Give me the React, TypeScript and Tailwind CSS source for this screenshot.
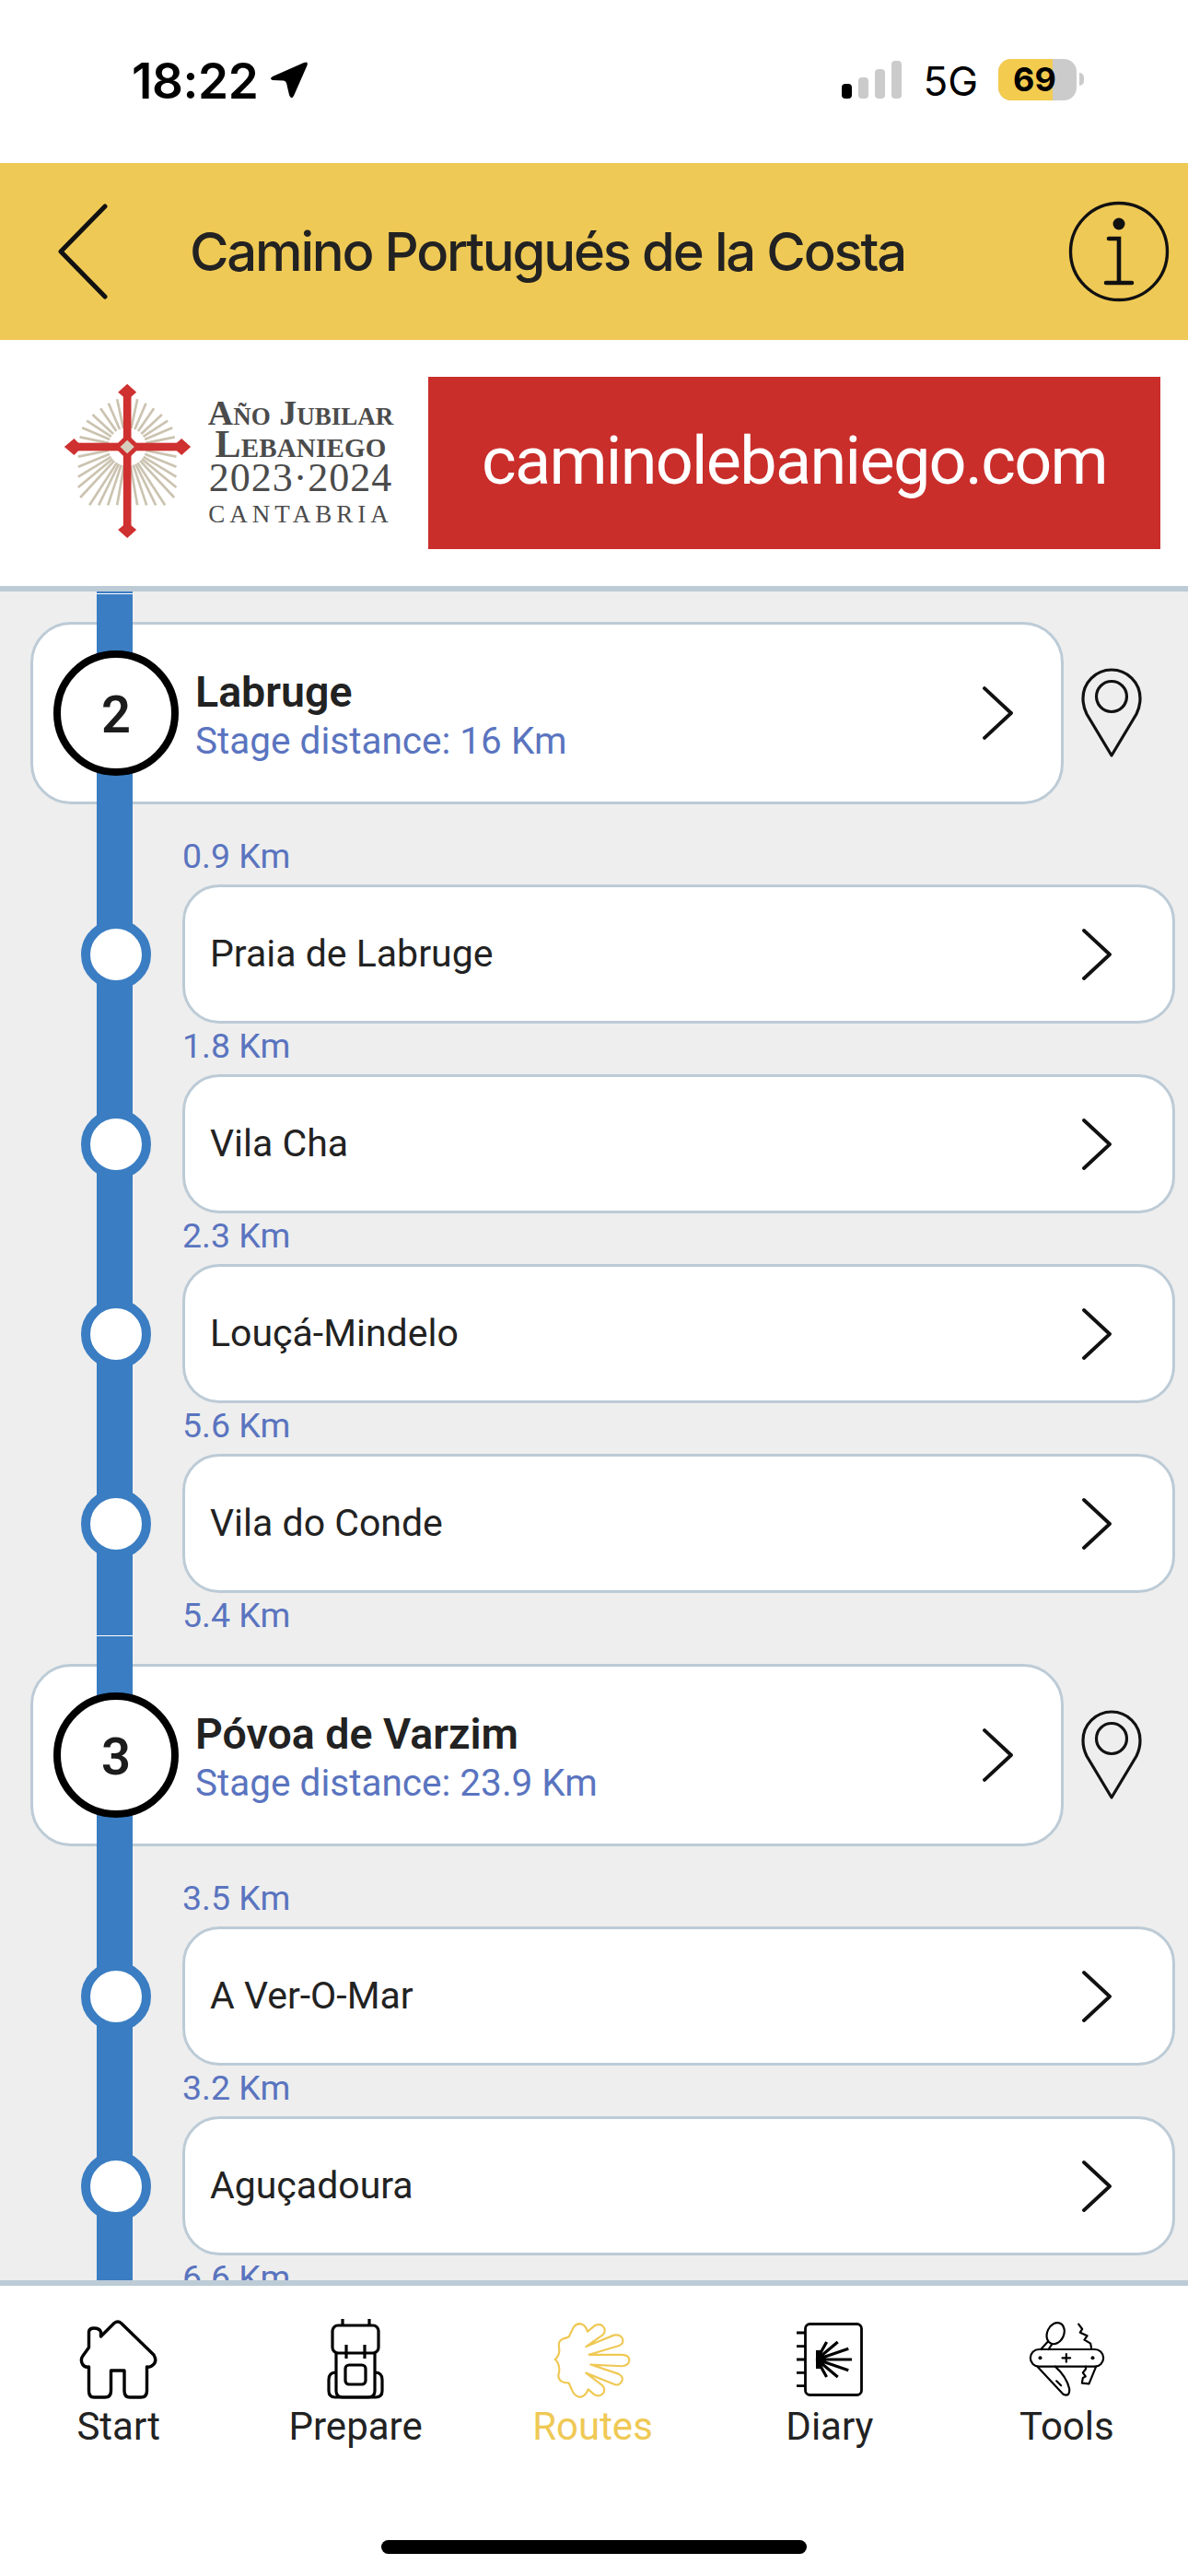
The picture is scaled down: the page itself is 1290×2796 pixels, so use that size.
import React from "react";

const FONT = "font-['Roboto',sans-serif]";

function Chevron({ className }: { className: string }) {
  return (
    <svg viewBox="0 0 32 56" className={className} fill="none" stroke="#111" strokeWidth="3.8" strokeLinecap="round" strokeLinejoin="round">
      <path d="M2 2 L30 28 L2 54" />
    </svg>
  );
}

function Pin() {
  return (
    <svg viewBox="0 0 66 98" className="w-[66px] h-[98px] shrink-0" fill="none" stroke="#111" strokeWidth="3.2">
      <path d="M33 95 L6 50 Q2 42 2 33 A31 31 0 0 1 64 33 Q64 42 60 50 Z" strokeLinejoin="round" />
      <circle cx="33" cy="31" r="16.5" />
    </svg>
  );
}

function Stage({ n, name, dist }: { n: string; name: string; dist: string }) {
  return (
    <div className="flex items-center ml-[33px]">
      <div className="w-[1122px] h-[198px] shrink-0 bg-white border-[3px] border-[#bccbd6] rounded-[44px] flex items-center">
        <div className="relative z-10 ml-[22px] w-[136px] h-[136px] rounded-full bg-white border-[8px] border-black flex items-center justify-center shrink-0">
          <span className="text-[56px] leading-none font-semibold text-[#1c1c1c] pt-[4px]">{n}</span>
        </div>
        <div className="ml-[18px] flex-1 flex flex-col pt-[4px]">
          <span className="text-[46.5px] leading-[55px] font-semibold text-[#222]">{name}</span>
          <span className="text-[40.5px] leading-[50px] text-[#5a74bf]">{dist}</span>
        </div>
        <Chevron className="w-[33px] h-[58px] mr-[52px] shrink-0" />
      </div>
      <div className="ml-[19px]">
        <Pin />
      </div>
    </div>
  );
}

function Km({ v }: { v: string }) {
  return (
    <div className="h-[55px] ml-[198px] flex items-center text-[37.5px] leading-none text-[#5a74bf] pb-[5px]">{v}</div>
  );
}

function Row({ km, name }: { km: string; name: string }) {
  return (
    <div>
      <Km v={km} />
      <div className="flex items-center h-[151px]">
        <div className="w-[198px] pl-[88px] shrink-0">
          <div className="relative z-10 w-[76px] h-[76px] rounded-full bg-white border-[10px] border-[#3a7dc2]" />
        </div>
        <div className="w-[1078px] h-[151px] bg-white border-[3px] border-[#bccbd6] rounded-[40px] flex items-center justify-between pl-[27px] pr-[66px]">
          <span className="text-[41px] text-[#222]">{name}</span>
          <Chevron className="w-[32px] h-[58px] shrink-0" />
        </div>
      </div>
    </div>
  );
}

function NavItem({ label, active, children }: { label: string; active?: boolean; children: React.ReactNode }) {
  return (
    <div className="flex flex-col items-center">
      <div className="h-[88px] flex items-center justify-center">{children}</div>
      <span className={`mt-[6px] text-[42px] leading-[46px] ${active ? "text-[#efc955]" : "text-[#222]"}`}>{label}</span>
    </div>
  );
}

const upperRays: [number, number][] = [
  [298, 105], [326, 118], [352, 135], [378, 155], [397, 175], [412, 198], [420, 228],
];
const lowerRays: [number, number][] = [
  [425, 292], [425, 325], [425, 358], [425, 392], [418, 425], [388, 450], [358, 450], [328, 450], [298, 450],
];

function Cross() {
  const cx = 265;
  const cy = 260;
  const ray = (x: number, y: number, key: string, start: number) => {
    const dx = x - cx;
    const dy = y - cy;
    const d = Math.hypot(dx, dy);
    const k = Math.min(start / d, 0.75);
    return <line key={key} x1={cx + dx * k} y1={cy + dy * k} x2={x} y2={y} />;
  };
  const mirror = (x: number) => 2 * cx - x;
  return (
    <svg viewBox="55 50 425 510" className="w-[142px] h-[170px] shrink-0 mb-[5px]">
      <g stroke="#cbc3b0" strokeWidth="8" fill="none">
        {upperRays.map(([x, y], i) => ray(x, y, `ur${i}`, 62))}
        {upperRays.map(([x, y], i) => ray(mirror(x), y, `ul${i}`, 62))}
        {lowerRays.map(([x, y], i) => ray(x, y, `lr${i}`, 62))}
        {lowerRays.map(([x, y], i) => ray(mirror(x), y, `ll${i}`, 62))}
      </g>
      <g fill="#cf3030">
        <rect x="252" y="75" width="26" height="460" />
        <rect x="80" y="247" width="370" height="26" />
        <path d="M265 55 L295 82 L265 108 L235 82 Z" />
        <path d="M265 505 L295 530 L265 557 L235 530 Z" />
        <path d="M60 260 L92 233 L118 260 L92 287 Z" />
        <path d="M472 260 L442 233 L412 260 L442 287 Z" />
        <path d="M265 218 L308 260 L265 302 L222 260 Z" />
      </g>
      <path d="M265 238 L288 260 L265 282 L242 260 Z" fill="#d6cfbd" />
    </svg>
  );
}

export default function App() {
  return (
    <div className={`w-[1290px] h-[2796px] flex flex-col bg-white overflow-hidden ${FONT}`}>
      {/* status bar */}
      <div className="h-[177px] shrink-0 flex items-start justify-between pl-[143px] pr-[113px] pt-[59px] font-['Inter',sans-serif] text-black">
        <div className="flex items-center h-[58px]">
          <span className="text-[53px] leading-none font-semibold tracking-[-0.4px]">18:22</span>
          <svg viewBox="0 0 42 42" className="w-[42px] h-[42px] ml-[13px] mb-[2px]" fill="#000">
            <path d="M3 17 L37 2 Q42 0 40.5 5 L26 38 Q23 43 21 37 L18 24 Q17.5 22 15 21.5 L3 21 Q-1 19.5 3 17 Z" />
          </svg>
        </div>
        <div className="flex items-center h-[58px] -mt-[2px]">
          <div className="flex items-end gap-[7px] h-[41px] mt-[1px]">
            <div className="w-[11px] h-[16px] rounded-[4px] bg-black" />
            <div className="w-[11px] h-[23px] rounded-[4px] bg-[#cbcbcb]" />
            <div className="w-[11px] h-[32px] rounded-[4px] bg-[#cbcbcb]" />
            <div className="w-[11px] h-[41px] rounded-[4px] bg-[#cbcbcb]" />
          </div>
          <span className="ml-[23px] text-[44px] leading-none mt-[4px]">5G</span>
          <div className="ml-[22px] w-[85px] h-[45px] rounded-[14px] bg-[#cbcbcb] overflow-hidden relative flex">
            <div className="w-[59px] h-full bg-[#f3cb4f]" />
            <span className="absolute inset-0 pl-[16px] flex items-center text-[36px] font-bold leading-none">69</span>
          </div>
          <div className="ml-[3px] w-[5px] h-[14px] rounded-r-full bg-[#cbcbcb]" />
        </div>
      </div>

      {/* header */}
      <div className="h-[192px] shrink-0 bg-[#efc955] flex items-center pl-[63px] pr-[20px]">
        <svg viewBox="0 0 54 104" className="w-[54px] h-[104px] shrink-0" fill="none" stroke="#111" strokeWidth="5" strokeLinecap="round" strokeLinejoin="round">
          <path d="M51 3 L3 52 L51 101" />
        </svg>
        <span className="ml-[89px] flex-1 text-[58px] leading-none text-[#222] font-['Inter',sans-serif] font-medium tracking-[-2.2px]">Camino Portugués de la Costa</span>
        <svg viewBox="0 0 110 110" className="w-[110px] h-[110px] shrink-0" fill="none" stroke="#111" strokeLinecap="round">
          <circle cx="55" cy="55" r="52.5" strokeWidth="3.4" />
          <circle cx="55" cy="25" r="6.5" fill="#111" stroke="none" />
          <path d="M44 41 L55 41 L55 89 M41 89 L69 89" strokeWidth="4.6" />
        </svg>
      </div>

      {/* banner */}
      <div className="h-[267px] shrink-0 bg-white flex items-center pl-[68px]">
        <Cross />
        <div className="ml-[14px] w-[205px] flex flex-col items-center font-['Liberation_Serif',serif] text-[#4b4b4b] font-bold">
          <span className="text-[38px] leading-[33px] [font-variant:small-caps] whitespace-nowrap">Año Jubilar</span>
          <span className="text-[42px] leading-[34px] [font-variant:small-caps] tracking-[0.2px] whitespace-nowrap">Lebaniego</span>
          <span className="text-[44px] leading-[40px] font-normal tracking-[1px] whitespace-nowrap">2023·2024</span>
          <span className="mt-[4px] text-[27px] leading-[30px] font-normal tracking-[5px] whitespace-nowrap">CANTABRIA</span>
        </div>
        <div className="ml-[36px] w-[795px] h-[187px] bg-[#c92e2b] flex items-center justify-center pb-[4px]">
          <span className="text-[72px] leading-none text-white font-['Roboto',sans-serif] tracking-[-1.7px]">caminolebaniego.com</span>
        </div>
      </div>

      {/* list */}
      <div className="flex-1 min-h-0 border-t-[6px] border-b-[6px] border-[#bccbd6] bg-[#eeeeee] overflow-hidden relative pt-[33px]">
        <div className="absolute left-[105px] top-0 bottom-0 w-[39px] flex flex-col">
          <div className="h-[2px] bg-[#3a7dc2]" />
          <div className="h-px bg-white" />
          <div className="h-[1130px] bg-[#3a7dc2]" />
          <div className="h-px bg-white" />
          <div className="flex-1 bg-[#3a7dc2]" />
        </div>
        <Stage n="2" name="Labruge" dist="Stage distance: 16 Km" />
        <div className="mt-[32px]">
          <Row km="0.9 Km" name="Praia de Labruge" />
          <Row km="1.8 Km" name="Vila Cha" />
          <Row km="2.3 Km" name="Louçá-Mindelo" />
          <Row km="5.6 Km" name="Vila do Conde" />
          <Km v="5.4 Km" />
        </div>
        <div className="mt-[22px]">
          <Stage n="3" name="Póvoa de Varzim" dist="Stage distance: 23.9 Km" />
        </div>
        <div className="mt-[32px]">
          <Row km="3.5 Km" name="A Ver-O-Mar" />
          <Row km="3.2 Km" name="Aguçadoura" />
          <Km v="6.6 Km" />
        </div>
      </div>

      {/* nav */}
      <div className="h-[315px] shrink-0 bg-white flex flex-col">
        <div className="grid grid-cols-5 pt-[36px] h-[276px] pr-[3px]">
          <NavItem label="Start">
            <svg viewBox="-2 -2 88 88" className="w-[88px] h-[88px]" fill="none" stroke="#000" strokeWidth="3.4" strokeLinejoin="round">
              <path d="M22.5 17 L37 2.5 Q41 -0.5 45 3 L80 37 Q84 44 79 48 Q76 51 72.5 50 L72.5 76 Q72.5 83 66 83 L54 83 Q48 83 48 76 L48 54 L33.5 54 L33.5 76 Q33.5 83 27 83 L15 83 Q9.5 83 9.5 76 L9.5 50 Q5 51 2.5 47 Q0 42 3 38 L9.5 29 L9.5 12 Q10 8 15 8 Q21 8 22.5 12 Z" />
            </svg>
          </NavItem>
          <NavItem label="Prepare">
            <svg viewBox="0 0 62 88" className="w-[62px] h-[88px]" fill="none" stroke="#000" strokeWidth="3.2" strokeLinejoin="round">
              <path d="M17 0 V7 M46 0 V7" />
              <rect x="6" y="7" width="50" height="30" rx="6" />
              <path d="M10 37 V78 Q10 85 17 85 H45 Q52 85 52 78 V37" />
              <path d="M21 28 V43 M41 28 V43" />
              <rect x="20" y="50" width="22" height="21" rx="4" />
              <path d="M10 58 Q2 58 2 66 V78 Q2 85 9 85 H53 Q60 85 60 78 V66 Q60 58 52 58" />
            </svg>
          </NavItem>
          <NavItem label="Routes" active>
            <svg viewBox="100 27 250 246" className="w-[84px] h-[83px]" fill="none" stroke="#efc955" strokeWidth="6.5" strokeLinejoin="round">
              <path d="M105 148 Q122 135 118 110 Q114 88 130 82 Q145 78 150 75 L165 44 Q180 26 198 38 Q208 46 210 58 L235 38 Q258 30 265 50 Q268 62 258 70 L205 107 L295 70 Q318 66 324 84 Q326 98 312 104 L215 133 L322 133 Q344 134 345 150 Q344 168 322 170 L220 165 L310 195 Q326 204 322 216 Q314 236 295 228 L205 192 L258 232 Q268 244 262 256 Q248 272 232 262 L212 245 Q204 268 186 270 Q168 268 160 248 L150 225 Q134 224 124 218 Q112 208 118 190 Q122 165 105 148 Z" />
            </svg>
          </NavItem>
          <NavItem label="Diary">
            <svg viewBox="0 0 72 80" className="w-[72px] h-[80px]" fill="none" stroke="#000" strokeWidth="2.8">
              <rect x="9.5" y="1.5" width="61" height="77" rx="5" />
              <path d="M0 11 H9 M0 25.7 H9 M0 40 H9 M0 54.3 H9 M0 68.7 H9" />
              <path d="M22 40 H60 M22 40 L56.3 28.3 M22 40 L56.3 51.7 M22 40 L44.7 21 M22 40 L44.7 59 M22 40 L32.6 21 M22 40 L32.6 59" strokeWidth="3.2" />
              <path d="M21 30 H26 V50 H21 Z" fill="#000" stroke="none" />
            </svg>
          </NavItem>
          <NavItem label="Tools">
            <svg viewBox="60 12 248 246" className="w-[83px] h-[82px]" fill="none" stroke="#000" strokeWidth="6.5" strokeLinejoin="round" strokeLinecap="round">
              <rect x="65" y="102" width="238" height="56" rx="28" />
              <circle cx="97" cy="130" r="6" fill="#000" stroke="none" />
              <circle cx="268" cy="130" r="6" fill="#000" stroke="none" />
              <path d="M169 130 H195 M182 117 V143" />
              <ellipse cx="147" cy="50" rx="27" ry="36" transform="rotate(25 147 50)" />
              <path d="M123 76 L99 102 M135 86 L124 102" />
              <path d="M222 20 L234 36 L227 47 L250 58 L241 71 L261 83 L264 100" />
              <path d="M88 158 L172 248 Q194 258 192 230 Q182 190 146 158" />
              <path d="M150 205 L165 220" />
              <path d="M279 158 L256 214 L233 212 L236 195 L245 190 L236 178 L246 165 L245 158" />
            </svg>
          </NavItem>
        </div>
        <div className="flex justify-center">
          <div className="w-[462px] h-[15px] rounded-full bg-black" />
        </div>
      </div>
    </div>
  );
}
